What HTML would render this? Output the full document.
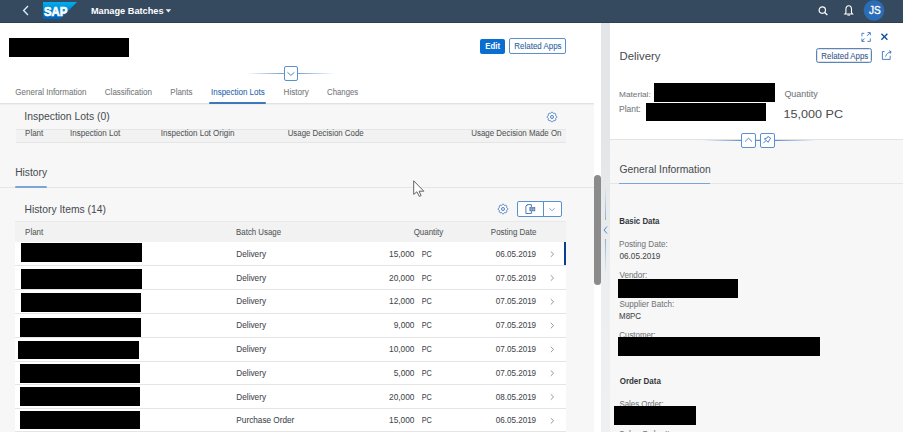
<!DOCTYPE html>
<html><head><meta charset="utf-8"><style>
html,body{margin:0;padding:0;width:903px;height:432px;overflow:hidden;background:#f7f7f7;position:relative;font-family:"Liberation Sans",sans-serif}
.a{position:absolute}
.t{position:absolute;white-space:nowrap;line-height:0;font-family:"Liberation Sans",sans-serif}
.s{-webkit-text-stroke:0.07px currentColor}
</style></head><body>
<!-- shell bar -->
<div class="a" style="left:0;top:0;width:903px;height:23px;background:#354a5f"></div>
<div class="a" style="left:0;top:22px;width:903px;height:1px;background:#2c3e50"></div>
<svg class="a" style="left:0;top:0" width="903" height="23">
  <polyline points="28,6 23.6,10.5 28,15" fill="none" stroke="#e3efff" stroke-width="1.3"/>
  <defs><linearGradient id="sapg" x1="0" y1="0" x2="0" y2="1"><stop offset="0" stop-color="#00aeef"/><stop offset="1" stop-color="#0060b8"/></linearGradient></defs>
  <polygon points="43,2 77,2 60.3,19 43,19" fill="url(#sapg)"/>
  <text x="44" y="15.6" font-family="Liberation Sans" font-weight="bold" font-size="13.2" fill="#fff" stroke="#fff" stroke-width="0.7" textLength="23.4" lengthAdjust="spacingAndGlyphs">SAP</text>
  <polygon points="165.6,9.3 171.2,9.3 168.4,12.6" fill="#e3efff"/>
  <circle cx="822.3" cy="10.1" r="3.2" fill="none" stroke="#fff" stroke-width="1.2"/>
  <line x1="824.6" y1="12.4" x2="827.4" y2="15" stroke="#fff" stroke-width="1.3"/>
  <path d="M844.8,14 L845.9,12.8 L845.9,9.3 C845.9,6.9 847.1,5.7 848.7,5.7 C850.3,5.7 851.5,6.9 851.5,9.3 L851.5,12.8 L852.6,14 Z" fill="none" stroke="#fff" stroke-width="1.1"/>
  <line x1="847.4" y1="15.1" x2="850" y2="15.1" stroke="#fff" stroke-width="1"/>
  <circle cx="874" cy="10.4" r="10.4" fill="#2a6cb5"/>
</svg>
<!-- left page white header -->
<div class="a" style="left:0;top:23px;width:601px;height:80px;background:#fff"></div>
<!-- scrollbar track -->
<div class="a" style="left:594px;top:23px;width:7px;height:409px;background:#fff"></div>
<div class="a" style="left:594px;top:175px;width:7px;height:110px;background:#8b8b8b;border-radius:3.5px"></div>
<!-- gray content top shadow -->
<div class="a" style="left:0;top:103px;width:594px;height:1px;background:#e2e2e2"></div>
<div class="a" style="left:0;top:104px;width:594px;height:1px;background:#efefef"></div>
<!-- edit & related apps -->
<div class="a" style="left:480px;top:39px;width:25px;height:15px;background:#0a6ed1;border-radius:2px"></div>
<div class="a" style="left:509px;top:38px;width:55px;height:14px;border:1px solid #5a8fd0;border-radius:2px;background:#fff"></div>
<!-- collapse line & button -->
<div class="a" style="left:246px;top:73px;width:89px;height:1px;background:linear-gradient(90deg,rgba(10,90,180,0),rgba(10,90,180,.55) 40%,rgba(10,90,180,.55) 60%,rgba(10,90,180,0))"></div>
<div class="a" style="left:283.5px;top:66px;width:12.5px;height:12.5px;border:1px solid #5a8fd0;border-radius:2px;background:#fff"></div>
<svg class="a" style="left:284px;top:66px" width="14" height="15"><polyline points="3.4,6.2 6.9,9.4 10.4,6.2" fill="none" stroke="#3f78c0" stroke-width="0.9"/></svg>
<!-- active tab underline -->
<div class="a" style="left:209px;top:102px;width:57px;height:2px;background:#3d78bd;border-radius:1px"></div>
<!-- inspection lots gear -->
<svg class="a" style="left:545px;top:110px" width="14" height="14"><path d="M11.80,7.00L11.70,7.46L11.41,7.88L11.00,8.21L10.60,8.49L10.69,8.97L10.74,9.50L10.65,9.99L10.39,10.39L9.99,10.65L9.50,10.74L8.97,10.69L8.49,10.60L8.21,11.00L7.88,11.41L7.46,11.70L7.00,11.80L6.54,11.70L6.12,11.41L5.79,11.00L5.51,10.60L5.03,10.69L4.50,10.74L4.01,10.65L3.61,10.39L3.35,9.99L3.26,9.50L3.31,8.97L3.40,8.49L3.00,8.21L2.59,7.88L2.30,7.46L2.20,7.00L2.30,6.54L2.59,6.12L3.00,5.79L3.40,5.51L3.31,5.03L3.26,4.50L3.35,4.01L3.61,3.61L4.01,3.35L4.50,3.26L5.03,3.31L5.51,3.40L5.79,3.00L6.12,2.59L6.54,2.30L7.00,2.20L7.46,2.30L7.88,2.59L8.21,3.00L8.49,3.40L8.97,3.31L9.50,3.26L9.99,3.35L10.39,3.61L10.65,4.01L10.74,4.50L10.69,5.03L10.60,5.51L11.00,5.79L11.41,6.12L11.70,6.54L11.80,7.00Z" fill="none" stroke="#3a70b8" stroke-width="0.85" stroke-linejoin="round"/><circle cx="7" cy="7" r="1.5" fill="none" stroke="#3a70b8" stroke-width="0.85"/></svg>
<!-- inspection lots table header -->
<div class="a" style="left:16px;top:129px;width:550px;height:12px;background:#f2f2f2;border-top:1px solid #e5e5e5;border-bottom:1px solid #e5e5e5"></div>
<!-- history section -->
<div class="a" style="left:0;top:187px;width:594px;height:1px;background:#e5e5e5"></div>
<div class="a" style="left:15px;top:186px;width:32px;height:2px;background:#7aa5d8;border-radius:1px"></div>
<svg class="a" style="left:496px;top:202px" width="14" height="14"><path d="M11.80,7.00L11.70,7.46L11.41,7.88L11.00,8.21L10.60,8.49L10.69,8.97L10.74,9.50L10.65,9.99L10.39,10.39L9.99,10.65L9.50,10.74L8.97,10.69L8.49,10.60L8.21,11.00L7.88,11.41L7.46,11.70L7.00,11.80L6.54,11.70L6.12,11.41L5.79,11.00L5.51,10.60L5.03,10.69L4.50,10.74L4.01,10.65L3.61,10.39L3.35,9.99L3.26,9.50L3.31,8.97L3.40,8.49L3.00,8.21L2.59,7.88L2.30,7.46L2.20,7.00L2.30,6.54L2.59,6.12L3.00,5.79L3.40,5.51L3.31,5.03L3.26,4.50L3.35,4.01L3.61,3.61L4.01,3.35L4.50,3.26L5.03,3.31L5.51,3.40L5.79,3.00L6.12,2.59L6.54,2.30L7.00,2.20L7.46,2.30L7.88,2.59L8.21,3.00L8.49,3.40L8.97,3.31L9.50,3.26L9.99,3.35L10.39,3.61L10.65,4.01L10.74,4.50L10.69,5.03L10.60,5.51L11.00,5.79L11.41,6.12L11.70,6.54L11.80,7.00Z" fill="none" stroke="#3a70b8" stroke-width="0.85" stroke-linejoin="round"/><circle cx="7" cy="7" r="1.5" fill="none" stroke="#3a70b8" stroke-width="0.85"/></svg>
<div class="a" style="left:517px;top:201px;width:43px;height:14px;border:1px solid #5a8fd0;border-radius:2px;background:#fff"></div>
<div class="a" style="left:543px;top:202px;width:1px;height:14px;background:#5a8fd0"></div>
<svg class="a" style="left:517px;top:201px" width="45" height="16">
  <path d="M10.4,3.6 L14.4,3.6 L14.4,12.5 L8.9,12.5 L8.9,5.1 Z" fill="#fff" stroke="#4070b5" stroke-width="0.9" stroke-linejoin="round"/>
  <path d="M8.9,5.1 L10.4,3.6 L10.4,5.1 Z" fill="#2a5aa0"/>
  <rect x="12.4" y="6" width="5.8" height="4.2" fill="#5a7cb6"/>
  <line x1="12.4" y1="8.1" x2="18.2" y2="8.1" stroke="#c5d2e8" stroke-width="0.45"/>
  <line x1="14.3" y1="6" x2="14.3" y2="10.2" stroke="#c5d2e8" stroke-width="0.45"/>
  <line x1="16.3" y1="6" x2="16.3" y2="10.2" stroke="#c5d2e8" stroke-width="0.45"/>
  <polyline points="32.4,7.2 35,9.8 37.6,7.2" fill="none" stroke="#6a93c8" stroke-width="0.8"/>
</svg>
<!-- history table header -->
<div class="a" style="left:15px;top:221px;width:551px;height:21px;background:#f2f2f2;border-top:1px solid #e9e9e9"></div>
<!-- rows -->
<div class="a" style="left:15px;top:242px;width:551px;height:190px;background:#fff"></div>
<div class="a" style="left:15px;top:265px;width:551px;height:1px;background:#e5e5e5"></div>
<div class="a" style="left:15px;top:289px;width:551px;height:1px;background:#e5e5e5"></div>
<div class="a" style="left:15px;top:313px;width:551px;height:1px;background:#e5e5e5"></div>
<div class="a" style="left:15px;top:337px;width:551px;height:1px;background:#e5e5e5"></div>
<div class="a" style="left:15px;top:360.5px;width:551px;height:1px;background:#e5e5e5"></div>
<div class="a" style="left:15px;top:384px;width:551px;height:1px;background:#e5e5e5"></div>
<div class="a" style="left:15px;top:408px;width:551px;height:1px;background:#e5e5e5"></div>
<div class="a" style="left:15px;top:431px;width:551px;height:1px;background:#e5e5e5"></div>
<div class="a" style="left:564px;top:242px;width:2px;height:23px;background:#0a3f91"></div>
<svg class="a" style="left:545px;top:242px" width="15" height="190">
  <g fill="none" stroke="#8a8d90" stroke-width="0.9">
  <polyline points="5.8,9.5 8.6,12.2 5.8,14.9"/>
  <polyline points="5.8,33.3 8.6,36 5.8,38.7"/>
  <polyline points="5.8,57.1 8.6,59.8 5.8,62.5"/>
  <polyline points="5.8,80.9 8.6,83.6 5.8,86.3"/>
  <polyline points="5.8,104.7 8.6,107.4 5.8,110.1"/>
  <polyline points="5.8,128.5 8.6,131.2 5.8,133.9"/>
  <polyline points="5.8,152.3 8.6,155 5.8,157.7"/>
  <polyline points="5.8,176.1 8.6,178.8 5.8,181.5"/>
  </g>
</svg>
<!-- divider band -->
<div class="a" style="left:601px;top:23px;width:9px;height:409px;background:#e3e6e8"></div>
<div class="a" style="left:601px;top:140px;width:9px;height:292px;background:linear-gradient(#e3e6e8,#eceeef 45%,#eef0f1)"></div>
<svg class="a" style="left:601px;top:180px" width="9" height="100">
  <defs><linearGradient id="vg1" x1="0" y1="0" x2="0" y2="1"><stop offset="0" stop-color="#3f7fc8" stop-opacity="0"/><stop offset="1" stop-color="#3f7fc8" stop-opacity=".55"/></linearGradient>
  <linearGradient id="vg2" x1="0" y1="0" x2="0" y2="1"><stop offset="0" stop-color="#3f7fc8" stop-opacity=".55"/><stop offset="1" stop-color="#3f7fc8" stop-opacity="0"/></linearGradient></defs>
  <rect x="4" y="6" width="1" height="34" fill="url(#vg1)"/>
  <rect x="4" y="59" width="1" height="35" fill="url(#vg2)"/>
  <polyline points="6,46.5 3,50 6,53.5" fill="none" stroke="#3f7fc8" stroke-width="0.9"/>
</svg>
<!-- right panel -->
<div class="a" style="left:610px;top:23px;width:293px;height:117px;background:#fff"></div>
<div class="a" style="left:610px;top:140px;width:293px;height:292px;background:#f7f7f7"></div>
<div class="a" style="left:610px;top:139px;width:293px;height:1px;background:#e2e2e2"></div>
<svg class="a" style="left:855px;top:27px" width="48" height="40">
  <g fill="none" stroke="#3a72bb" stroke-width="0.9">
   <polyline points="6.9,9.3 6.9,6.3 9.3,6.3"/>
   <polyline points="15.3,11.5 15.3,14.4 12.5,14.4"/>
   <polyline points="12.5,5.6 15.3,5.6 15.3,8.3"/><line x1="15" y1="5.9" x2="12" y2="8.9"/>
   <polyline points="6.9,11.5 6.9,14.4 9.5,14.4"/><line x1="7.2" y1="14.1" x2="9.5" y2="11.6"/>
   <line x1="26.4" y1="6.8" x2="32.4" y2="12.7" stroke="#0b4f9c" stroke-width="1.3"/><line x1="32.4" y1="6.8" x2="26.4" y2="12.7" stroke="#0b4f9c" stroke-width="1.3"/>
   <polyline points="29.6,24.5 27.4,24.5 27.4,32.4 35.2,32.4 35.2,28.7"/>
   <path d="M30.6,29.6 C31.2,27 33,25.4 36,24.8"/><polyline points="34,23.6 36.2,24.8 35,26.8"/>
  </g>
</svg>
<div class="a" style="left:816px;top:48px;width:54px;height:12.5px;border:1.6px solid #5286c6;border-radius:2.5px;background:#fff;box-shadow:inset 0 0 0 0.9px #e6e0d6"></div>
<div class="a" style="left:703px;top:139.5px;width:112px;height:1px;background:linear-gradient(90deg,rgba(10,90,180,0),rgba(10,90,180,.65) 35%,rgba(10,90,180,.65) 65%,rgba(10,90,180,0))"></div>
<div class="a" style="left:741px;top:133px;width:13px;height:12.5px;border:1px solid #5a8fd0;border-radius:2px;background:#fff"></div>
<div class="a" style="left:760px;top:133px;width:12.5px;height:12.5px;border:1px solid #5a8fd0;border-radius:2px;background:#fff"></div>
<svg class="a" style="left:741px;top:133px" width="35" height="15">
  <polyline points="4,8.6 7.5,5.2 11,8.6" fill="none" stroke="#3f78c0" stroke-width="0.9"/>
  <g fill="none" stroke="#3f78c0" stroke-width="0.9" stroke-linejoin="round">
    <path d="M23.3,5.9 L26.2,4.9 L26.9,3.4 L29.9,5.4 L28.6,6.4 L27.3,9.3 Z"/>
    <line x1="22.3" y1="10.3" x2="25" y2="7.5"/>
  </g>
</svg>
<div class="a" style="left:610px;top:183px;width:293px;height:1px;background:#e5e5e5"></div>
<div class="a" style="left:619px;top:182.5px;width:91px;height:1.5px;background:#7aa5d8"></div>

<div class='t' style="top:10px;font-size:9.74px;font-weight:700;color:#ffffff;left:90px;transform:translate(0.948px,0.500px) scaleX(0.9451) rotate(0.0001deg);transform-origin:left;">Manage Batches</div><div class='t' style="top:10px;font-size:10.76px;font-weight:400;color:#ffffff;left:868px;transform:translate(0.899px,0.200px) scaleX(0.9361) rotate(0.0001deg);transform-origin:left;-webkit-text-stroke:0.35px #fff;">JS</div><div class='t' style="top:46px;font-size:8.28px;font-weight:700;color:#ffffff;left:485px;transform:translate(0.282px,0.900px) scaleX(0.9423) rotate(0.0001deg);transform-origin:left;">Edit</div><div class='t s' style="top:46px;font-size:8.58px;font-weight:400;color:#2c5f9e;left:514px;transform:translate(0.365px,0.400px) scaleX(0.9250) rotate(0.0001deg);transform-origin:left;">Related Apps</div><div class='t s' style="top:92px;font-size:8.87px;font-weight:400;color:#75787b;left:15px;transform:translate(0.348px,0.000px) scaleX(0.9074) rotate(0.0001deg);transform-origin:left;">General Information</div><div class='t s' style="top:92px;font-size:8.87px;font-weight:400;color:#75787b;left:104px;transform:translate(0.850px,0.000px) scaleX(0.9018) rotate(0.0001deg);transform-origin:left;">Classification</div><div class='t s' style="top:92px;font-size:8.87px;font-weight:400;color:#75787b;left:170px;transform:translate(0.363px,0.000px) scaleX(0.8981) rotate(0.0001deg);transform-origin:left;">Plants</div><div class='t s' style="top:92px;font-size:8.87px;font-weight:400;color:#2a65ad;left:211px;transform:translate(0.031px,0.000px) scaleX(0.9006) rotate(0.0001deg);transform-origin:left;">Inspection Lots</div><div class='t s' style="top:92px;font-size:8.87px;font-weight:400;color:#75787b;left:283px;transform:translate(0.603px,0.000px) scaleX(0.9117) rotate(0.0001deg);transform-origin:left;">History</div><div class='t s' style="top:92px;font-size:8.87px;font-weight:400;color:#75787b;left:327px;transform:translate(0.111px,0.000px) scaleX(0.8769) rotate(0.0001deg);transform-origin:left;">Changes</div><div class='t' style="top:116px;font-size:10.03px;font-weight:400;color:#464a4e;left:24px;transform:translate(0.315px,0.700px) scaleX(1.0361) rotate(0.0001deg);transform-origin:left;">Inspection Lots (0)</div><div class='t s' style="top:133px;font-size:8.28px;font-weight:400;color:#55585b;left:25px;transform:translate(0.114px,0.900px) scaleX(0.9595) rotate(0.0001deg);transform-origin:left;">Plant</div><div class='t s' style="top:133px;font-size:8.28px;font-weight:400;color:#55585b;left:70px;transform:translate(0.024px,0.900px) scaleX(0.9733) rotate(0.0001deg);transform-origin:left;">Inspection Lot</div><div class='t s' style="top:133px;font-size:8.28px;font-weight:400;color:#55585b;left:160px;transform:translate(0.775px,0.900px) scaleX(0.9729) rotate(0.0001deg);transform-origin:left;">Inspection Lot Origin</div><div class='t s' style="top:133px;font-size:8.28px;font-weight:400;color:#55585b;left:287px;transform:translate(0.699px,0.900px) scaleX(0.9495) rotate(0.0001deg);transform-origin:left;">Usage Decision Code</div><div class='t s' style="top:133px;font-size:8.28px;font-weight:400;color:#55585b;left:471px;transform:translate(0.194px,0.900px) scaleX(0.9587) rotate(0.0001deg);transform-origin:left;">Usage Decision Made On</div><div class='t' style="top:172px;font-size:11.05px;font-weight:400;color:#464a4e;left:15px;transform:translate(0.182px,0.200px) scaleX(0.9258) rotate(0.0001deg);transform-origin:left;">History</div><div class='t' style="top:209px;font-size:10.17px;font-weight:400;color:#464a4e;left:24px;transform:translate(0.422px,0.500px) scaleX(1.0168) rotate(0.0001deg);transform-origin:left;">History Items (14)</div><div class='t s' style="top:231px;font-size:8.58px;font-weight:400;color:#55585b;left:25px;transform:translate(0.114px,0.900px) scaleX(0.9272) rotate(0.0001deg);transform-origin:left;">Plant</div><div class='t s' style="top:231px;font-size:8.58px;font-weight:400;color:#55585b;left:236px;transform:translate(0.122px,0.900px) scaleX(0.9147) rotate(0.0001deg);transform-origin:left;">Batch Usage</div><div class='t s' style="top:231px;font-size:8.58px;font-weight:400;color:#55585b;left:413px;transform:translate(0.682px,0.900px) scaleX(0.9259) rotate(0.0001deg);transform-origin:left;">Quantity</div><div class='t s' style="top:231px;font-size:8.58px;font-weight:400;color:#55585b;left:490px;transform:translate(0.865px,0.900px) scaleX(0.9251) rotate(0.0001deg);transform-origin:left;">Posting Date</div><div class='t s' style="top:253px;font-size:8.87px;font-weight:400;color:#44484c;left:236px;transform:translate(0.342px,0.800px) scaleX(0.9278) rotate(0.0001deg);transform-origin:left;">Delivery</div><div class='t s' style="top:253px;font-size:8.87px;font-weight:400;color:#44484c;right:488px;transform:translate(-0.700px,0.800px) scaleX(0.9361) rotate(0.0001deg);transform-origin:right;">15,000</div><div class='t s' style="top:253px;font-size:8.87px;font-weight:400;color:#44484c;left:421px;transform:translate(0.670px,0.800px) scaleX(0.8180) rotate(0.0001deg);transform-origin:left;">PC</div><div class='t s' style="top:253px;font-size:8.87px;font-weight:400;color:#44484c;left:495px;transform:translate(0.758px,0.800px) scaleX(0.9097) rotate(0.0001deg);transform-origin:left;">06.05.2019</div><div class='t s' style="top:277px;font-size:8.87px;font-weight:400;color:#44484c;left:236px;transform:translate(0.342px,0.600px) scaleX(0.9278) rotate(0.0001deg);transform-origin:left;">Delivery</div><div class='t s' style="top:277px;font-size:8.87px;font-weight:400;color:#44484c;right:488px;transform:translate(-0.700px,0.600px) scaleX(0.9361) rotate(0.0001deg);transform-origin:right;">20,000</div><div class='t s' style="top:277px;font-size:8.87px;font-weight:400;color:#44484c;left:421px;transform:translate(0.670px,0.600px) scaleX(0.8180) rotate(0.0001deg);transform-origin:left;">PC</div><div class='t s' style="top:277px;font-size:8.87px;font-weight:400;color:#44484c;left:495px;transform:translate(0.758px,0.600px) scaleX(0.9097) rotate(0.0001deg);transform-origin:left;">07.05.2019</div><div class='t s' style="top:301px;font-size:8.87px;font-weight:400;color:#44484c;left:236px;transform:translate(0.342px,0.400px) scaleX(0.9278) rotate(0.0001deg);transform-origin:left;">Delivery</div><div class='t s' style="top:301px;font-size:8.87px;font-weight:400;color:#44484c;right:488px;transform:translate(-0.700px,0.400px) scaleX(0.9361) rotate(0.0001deg);transform-origin:right;">12,000</div><div class='t s' style="top:301px;font-size:8.87px;font-weight:400;color:#44484c;left:421px;transform:translate(0.670px,0.400px) scaleX(0.8180) rotate(0.0001deg);transform-origin:left;">PC</div><div class='t s' style="top:301px;font-size:8.87px;font-weight:400;color:#44484c;left:495px;transform:translate(0.758px,0.400px) scaleX(0.9097) rotate(0.0001deg);transform-origin:left;">07.05.2019</div><div class='t s' style="top:325px;font-size:8.87px;font-weight:400;color:#44484c;left:236px;transform:translate(0.342px,0.200px) scaleX(0.9278) rotate(0.0001deg);transform-origin:left;">Delivery</div><div class='t s' style="top:325px;font-size:8.87px;font-weight:400;color:#44484c;right:488px;transform:translate(-0.700px,0.200px) scaleX(0.9361) rotate(0.0001deg);transform-origin:right;">9,000</div><div class='t s' style="top:325px;font-size:8.87px;font-weight:400;color:#44484c;left:421px;transform:translate(0.670px,0.200px) scaleX(0.8180) rotate(0.0001deg);transform-origin:left;">PC</div><div class='t s' style="top:325px;font-size:8.87px;font-weight:400;color:#44484c;left:495px;transform:translate(0.758px,0.200px) scaleX(0.9097) rotate(0.0001deg);transform-origin:left;">07.05.2019</div><div class='t s' style="top:349px;font-size:8.87px;font-weight:400;color:#44484c;left:236px;transform:translate(0.342px,0.000px) scaleX(0.9278) rotate(0.0001deg);transform-origin:left;">Delivery</div><div class='t s' style="top:349px;font-size:8.87px;font-weight:400;color:#44484c;right:488px;transform:translate(-0.700px,0.000px) scaleX(0.9361) rotate(0.0001deg);transform-origin:right;">10,000</div><div class='t s' style="top:349px;font-size:8.87px;font-weight:400;color:#44484c;left:421px;transform:translate(0.670px,0.000px) scaleX(0.8180) rotate(0.0001deg);transform-origin:left;">PC</div><div class='t s' style="top:349px;font-size:8.87px;font-weight:400;color:#44484c;left:495px;transform:translate(0.758px,0.000px) scaleX(0.9097) rotate(0.0001deg);transform-origin:left;">07.05.2019</div><div class='t s' style="top:372px;font-size:8.87px;font-weight:400;color:#44484c;left:236px;transform:translate(0.342px,0.800px) scaleX(0.9278) rotate(0.0001deg);transform-origin:left;">Delivery</div><div class='t s' style="top:372px;font-size:8.87px;font-weight:400;color:#44484c;right:488px;transform:translate(-0.700px,0.800px) scaleX(0.9361) rotate(0.0001deg);transform-origin:right;">5,000</div><div class='t s' style="top:372px;font-size:8.87px;font-weight:400;color:#44484c;left:421px;transform:translate(0.670px,0.800px) scaleX(0.8180) rotate(0.0001deg);transform-origin:left;">PC</div><div class='t s' style="top:372px;font-size:8.87px;font-weight:400;color:#44484c;left:495px;transform:translate(0.758px,0.800px) scaleX(0.9097) rotate(0.0001deg);transform-origin:left;">07.05.2019</div><div class='t s' style="top:396px;font-size:8.87px;font-weight:400;color:#44484c;left:236px;transform:translate(0.342px,0.600px) scaleX(0.9278) rotate(0.0001deg);transform-origin:left;">Delivery</div><div class='t s' style="top:396px;font-size:8.87px;font-weight:400;color:#44484c;right:488px;transform:translate(-0.700px,0.600px) scaleX(0.9361) rotate(0.0001deg);transform-origin:right;">20,000</div><div class='t s' style="top:396px;font-size:8.87px;font-weight:400;color:#44484c;left:421px;transform:translate(0.670px,0.600px) scaleX(0.8180) rotate(0.0001deg);transform-origin:left;">PC</div><div class='t s' style="top:396px;font-size:8.87px;font-weight:400;color:#44484c;left:495px;transform:translate(0.758px,0.600px) scaleX(0.9097) rotate(0.0001deg);transform-origin:left;">08.05.2019</div><div class='t s' style="top:420px;font-size:8.87px;font-weight:400;color:#44484c;left:236px;transform:translate(0.342px,0.400px) scaleX(0.9278) rotate(0.0001deg);transform-origin:left;">Purchase Order</div><div class='t s' style="top:420px;font-size:8.87px;font-weight:400;color:#44484c;right:488px;transform:translate(-0.700px,0.400px) scaleX(0.9361) rotate(0.0001deg);transform-origin:right;">15,000</div><div class='t s' style="top:420px;font-size:8.87px;font-weight:400;color:#44484c;left:421px;transform:translate(0.670px,0.400px) scaleX(0.8180) rotate(0.0001deg);transform-origin:left;">PC</div><div class='t s' style="top:420px;font-size:8.87px;font-weight:400;color:#44484c;left:495px;transform:translate(0.758px,0.400px) scaleX(0.9097) rotate(0.0001deg);transform-origin:left;">06.05.2019</div><div class='t' style="top:55px;font-size:10.90px;font-weight:400;color:#464a4e;left:619px;transform:translate(0.594px,0.500px) scaleX(1.0390) rotate(0.0001deg);transform-origin:left;">Delivery</div><div class='t s' style="top:55px;font-size:9.16px;font-weight:400;color:#34558a;left:821px;transform:translate(0.369px,0.800px) scaleX(0.8617) rotate(0.0001deg);transform-origin:left;">Related Apps</div><div class='t s' style="top:94px;font-size:7.99px;font-weight:400;color:#75787b;left:619px;transform:translate(0.090px,0.500px) scaleX(1.0321) rotate(0.0001deg);transform-origin:left;">Material:</div><div class='t s' style="top:109px;font-size:8.28px;font-weight:400;color:#75787b;left:619px;transform:translate(0.072px,0.900px) scaleX(1.0230) rotate(0.0001deg);transform-origin:left;">Plant:</div><div class='t s' style="top:94px;font-size:8.87px;font-weight:400;color:#75787b;left:784px;transform:translate(0.392px,0.200px) scaleX(1.0103) rotate(0.0001deg);transform-origin:left;">Quantity</div><div class='t' style="top:114px;font-size:11.34px;font-weight:400;color:#464a4e;left:783px;transform:translate(0.618px,0.200px) scaleX(1.1113) rotate(0.0001deg);transform-origin:left;">15,000 PC</div><div class='t' style="top:168px;font-size:11.34px;font-weight:400;color:#464a4e;left:619px;transform:translate(0.483px,0.800px) scaleX(0.9117) rotate(0.0001deg);transform-origin:left;">General Information</div><div class='t' style="top:220px;font-size:8.58px;font-weight:700;color:#32363a;left:619px;transform:translate(0.279px,0.800px) scaleX(0.9148) rotate(0.0001deg);transform-origin:left;">Basic Data</div><div class='t s' style="top:244px;font-size:9.16px;font-weight:400;color:#75787b;left:619px;transform:translate(0.102px,0.400px) scaleX(0.8842) rotate(0.0001deg);transform-origin:left;">Posting Date:</div><div class='t s' style="top:255px;font-size:8.72px;font-weight:400;color:#44484c;left:619px;transform:translate(0.505px,0.900px) scaleX(0.9364) rotate(0.0001deg);transform-origin:left;">06.05.2019</div><div class='t s' style="top:274px;font-size:8.87px;font-weight:400;color:#75787b;left:619px;transform:translate(0.500px,0.500px) scaleX(0.9065) rotate(0.0001deg);transform-origin:left;">Vendor:</div><div class='t s' style="top:304px;font-size:8.87px;font-weight:400;color:#75787b;left:619px;transform:translate(0.427px,0.000px) scaleX(0.9111) rotate(0.0001deg);transform-origin:left;">Supplier Batch:</div><div class='t s' style="top:315px;font-size:8.72px;font-weight:400;color:#44484c;left:619px;transform:translate(0.120px,0.900px) scaleX(0.9034) rotate(0.0001deg);transform-origin:left;">M8PC</div><div class='t s' style="top:334px;font-size:8.87px;font-weight:400;color:#75787b;left:619px;transform:translate(0.356px,0.500px) scaleX(0.8886) rotate(0.0001deg);transform-origin:left;">Customer:</div><div class='t' style="top:380px;font-size:8.72px;font-weight:700;color:#32363a;left:619px;transform:translate(0.681px,0.600px) scaleX(0.9143) rotate(0.0001deg);transform-origin:left;">Order Data</div><div class='t s' style="top:404px;font-size:8.87px;font-weight:400;color:#75787b;left:619px;transform:translate(0.435px,0.300px) scaleX(0.8893) rotate(0.0001deg);transform-origin:left;">Sales Order:</div><div class='t s' style="top:434px;font-size:8.87px;font-weight:400;color:#75787b;left:618px;transform:translate(0.921px,0.200px) scaleX(0.9278) rotate(0.0001deg);transform-origin:left;">Sales Order Item:</div>
<!-- black title -->
<div class="a" style="left:9px;top:38px;width:120px;height:19px;background:#000"></div>
<div class="a" style="left:21px;top:243px;width:121px;height:19px;background:#000"></div>
<div class="a" style="left:21px;top:269px;width:121px;height:19.5px;background:#000"></div>
<div class="a" style="left:20.6px;top:292.6px;width:120.6px;height:19.4px;background:#000"></div>
<div class="a" style="left:20px;top:317.8px;width:120.8px;height:19.2px;background:#000"></div>
<div class="a" style="left:18.3px;top:340.6px;width:120.5px;height:18.6px;background:#000"></div>
<div class="a" style="left:19.6px;top:364.2px;width:120.3px;height:19px;background:#000"></div>
<div class="a" style="left:19.6px;top:387.3px;width:120.3px;height:19px;background:#000"></div>
<div class="a" style="left:19.6px;top:410.6px;width:120.3px;height:18.6px;background:#000"></div>
<!-- mouse cursor -->
<svg class="a" style="left:412px;top:179px" width="16" height="20"><path d="M1.7,1.8 L1.7,15.4 L4.9,12.8 L7.3,17.4 L9.1,16.6 L7.1,12.2 L11.8,12.2 Z" fill="#fff" stroke="#5a5a5a" stroke-width="0.95" stroke-linejoin="round"/></svg>
<div class="a" style="left:654.2px;top:83.4px;width:120.8px;height:18.5px;background:#000"></div>
<div class="a" style="left:645.5px;top:102.5px;width:120.5px;height:18.7px;background:#000"></div>
<div class="a" style="left:618px;top:279.1px;width:120px;height:19.1px;background:#000"></div>
<div class="a" style="left:618px;top:336.8px;width:202px;height:19px;background:#000"></div>
<div class="a" style="left:614px;top:406px;width:82px;height:19px;background:#000"></div>

</body></html>
